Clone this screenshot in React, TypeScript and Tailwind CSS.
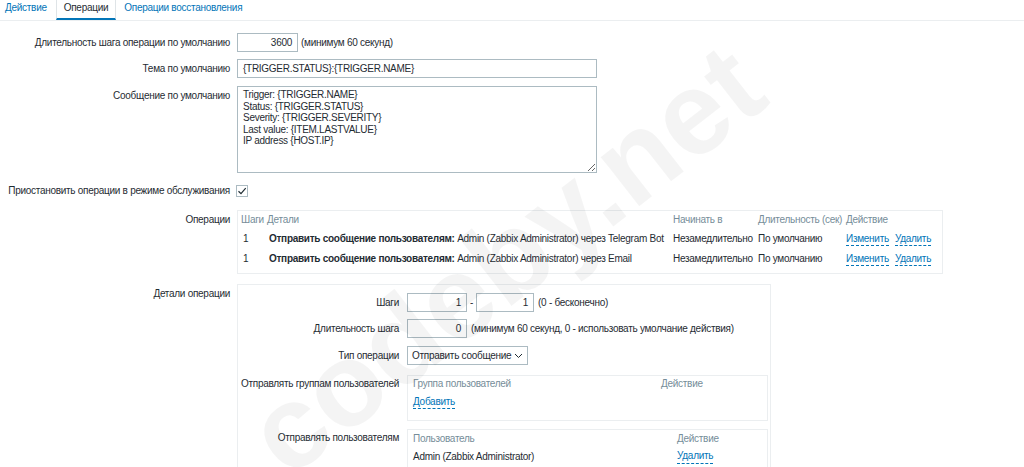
import React from "react";

const F = "font-['Liberation_Sans',Arial,sans-serif]";

function Input({ value, w, right }: { value: string; w: string; right?: boolean }) {
  return (
    <div
      className={`h-[19px] ${w} border border-[#acbbc2] bg-white px-[5px] flex items-center ${right ? "justify-end" : ""} text-[#1f2c33] shrink-0 whitespace-nowrap`}
    >
      {value}
    </div>
  );
}

function Link({ children }: { children: React.ReactNode }) {
  return (
    <span className="text-[#0275b8] border-b border-dashed border-[#0275b8] leading-[12px] pb-[1px]">{children}</span>
  );
}

export default function App() {
  return (
    <div className={`${F} text-[10px] tracking-[-0.28px] leading-[14px] text-[#1f2c33] bg-white w-[1024px] h-[467px] overflow-hidden relative`}>
      {/* tabs */}
      <div className="flex h-[21px] border-b border-[#ebeef0] items-stretch">
        <div className="pl-[5px] pr-[9px] pt-[1px] text-[#0275b8]">Действие</div>
        <div className="px-[7px] pt-[1px] border-x border-[#dfe4e7] border-b-2 border-b-[#0275b8] text-[#1f2c33]">
          Операции
        </div>
        <div className="px-[8px] pt-[1px] text-[#0275b8]">Операции восстановления</div>
      </div>

      <div className="pt-[12px]">
        {/* row 1 */}
        <div className="flex items-center">
          <div className="w-[230px] text-right">Длительность шага операции по умолчанию</div>
          <div className="ml-[7px] flex items-center">
            <Input value="3600" w="w-[61px]" right />
            <span className="ml-[3px]">(минимум 60 секунд)</span>
          </div>
        </div>
        {/* row 2 */}
        <div className="flex items-center mt-[7px]">
          <div className="w-[230px] text-right">Тема по умолчанию</div>
          <div className="ml-[7px]">
            <Input value="{TRIGGER.STATUS}:{TRIGGER.NAME}" w="w-[360px]" />
          </div>
        </div>
        {/* row 3 */}
        <div className="flex items-start mt-[8px]">
          <div className="w-[230px] text-right pt-[3px]">Сообщение по умолчанию</div>
          <div className="ml-[7px]">
            <textarea
              readOnly
              className={`${F} block w-[360px] h-[87px] border border-[#acbbc2] px-[5px] py-[2px] text-[10px] tracking-[-0.28px] leading-[11.5px] text-[#1f2c33] outline-none resize`}
              defaultValue={"Trigger: {TRIGGER.NAME}\nStatus: {TRIGGER.STATUS}\nSeverity: {TRIGGER.SEVERITY}\nLast value: {ITEM.LASTVALUE}\nIP address {HOST.IP}"}
            />
          </div>
        </div>
        {/* row 4 */}
        <div className="flex items-center mt-[11px]">
          <div className="w-[230px] text-right whitespace-nowrap">Приостановить операции в режиме обслуживания</div>
          <div className="ml-[6px] w-[12px] h-[12px] border border-[#acbbc2] flex items-center justify-center">
            <svg width="10" height="10" viewBox="0 0 10 10">
              <path d="M1.5 5.2 L4 7.6 L8.7 2.2" stroke="#1f2c33" strokeWidth="1.2" fill="none" />
            </svg>
          </div>
        </div>
        {/* row 5 operations */}
        <div className="flex items-start mt-[12px]">
          <div className="w-[230px] text-right pt-[3px]">Операции</div>
          <div className="ml-[7px] w-[706px] h-[64px] border border-[#ebeef0] pl-[3px] pr-[4px]">
            <table className="w-[696px] border-collapse table-fixed">
              <colgroup>
                <col className="w-[24px]" />
                <col className="w-[408px]" />
                <col className="w-[85px]" />
                <col className="w-[88px]" />
                <col className="w-[91px]" />
              </colgroup>
              <thead>
                <tr className="text-[#768d99] h-[18px] text-left">
                  <th className="font-normal p-0 whitespace-nowrap">Шаги</th>
                  <th className="font-normal p-0 pl-[2px]">Детали</th>
                  <th className="font-normal p-0 whitespace-nowrap">Начинать в</th>
                  <th className="font-normal p-0 whitespace-nowrap">Длительность (сек)</th>
                  <th className="font-normal p-0">Действие</th>
                </tr>
              </thead>
              <tbody>
                {["Telegram Bot", "Email"].map((m) => (
                  <tr key={m} className="h-[20px]">
                    <td className="p-0 pl-[2px]">1</td>
                    <td className="p-0 pl-[4px] whitespace-nowrap">
                      <b>Отправить сообщение пользователям:</b> Admin (Zabbix Administrator) через {m}
                    </td>
                    <td className="p-0 whitespace-nowrap">Незамедлительно</td>
                    <td className="p-0 whitespace-nowrap">По умолчанию</td>
                    <td className="p-0 whitespace-nowrap">
                      <Link>Изменить</Link>
                      <span className="ml-[6px]">
                        <Link>Удалить</Link>
                      </span>
                    </td>
                  </tr>
                ))}
              </tbody>
            </table>
          </div>
        </div>
        {/* row 6 details */}
        <div className="flex items-start mt-[10px]">
          <div className="w-[230px] text-right pt-[3px]">Детали операции</div>
          <div className="ml-[7px] w-[534px] h-[200px] border border-[#ebeef0] pt-[8px]">
            <div className="flex items-center">
              <div className="w-[161px] text-right">Шаги</div>
              <div className="ml-[8px] flex items-center">
                <Input value="1" w="w-[60px]" right />
                <span className="mx-[3px]">-</span>
                <Input value="1" w="w-[58px]" right />
                <span className="ml-[4px]">(0 - бесконечно)</span>
              </div>
            </div>
            <div className="flex items-center mt-[7px]">
              <div className="w-[161px] text-right">Длительность шага</div>
              <div className="ml-[8px] flex items-center">
                <Input value="0" w="w-[60px]" right />
                <span className="ml-[4px] whitespace-nowrap">(минимум 60 секунд, 0 - использовать умолчание действия)</span>
              </div>
            </div>
            <div className="flex items-center mt-[8px]">
              <div className="w-[161px] text-right">Тип операции</div>
              <div className="ml-[8px] h-[19px] w-[121px] border border-[#acbbc2] flex items-center justify-between pl-[4px] pr-[4px] whitespace-nowrap">
                <span>Отправить сообщение</span>
                <svg width="9" height="6" viewBox="0 0 9 6">
                  <path d="M1 1 L4.5 4.5 L8 1" stroke="#1f2c33" strokeWidth="1" fill="none" />
                </svg>
              </div>
            </div>
            <div className="flex items-start mt-[10px]">
              <div className="w-[161px] text-right pt-[2px] whitespace-nowrap">Отправлять группам пользователей</div>
              <div className="ml-[8px] w-[361px] h-[46px] border border-[#ebeef0] px-[5px] pt-[1px]">
                <div className="flex text-[#768d99]">
                  <span className="w-[248px]">Группа пользователей</span>
                  <span>Действие</span>
                </div>
                <div className="mt-[4px]">
                  <Link>Добавить</Link>
                </div>
              </div>
            </div>
            <div className="flex items-start mt-[8px]">
              <div className="w-[161px] text-right pt-[2px] whitespace-nowrap">Отправлять пользователям</div>
              <div className="ml-[8px] w-[361px] h-[60px] border border-[#ebeef0] px-[5px] pt-[2px]">
                <div className="flex text-[#768d99]">
                  <span className="w-[264px]">Пользователь</span>
                  <span>Действие</span>
                </div>
                <div className="flex mt-[4px]">
                  <span className="w-[264px]">Admin (Zabbix Administrator)</span>
                  <Link>Удалить</Link>
                </div>
              </div>
            </div>
          </div>
        </div>
      </div>

      {/* watermark */}
      <div className="absolute left-[185px] top-[200px] w-[640px] text-center pointer-events-none select-none rotate-[-38deg] text-[118px] tracking-normal font-bold text-black/[0.045] leading-none whitespace-nowrap">
        codeby.net
      </div>
    </div>
  );
}
